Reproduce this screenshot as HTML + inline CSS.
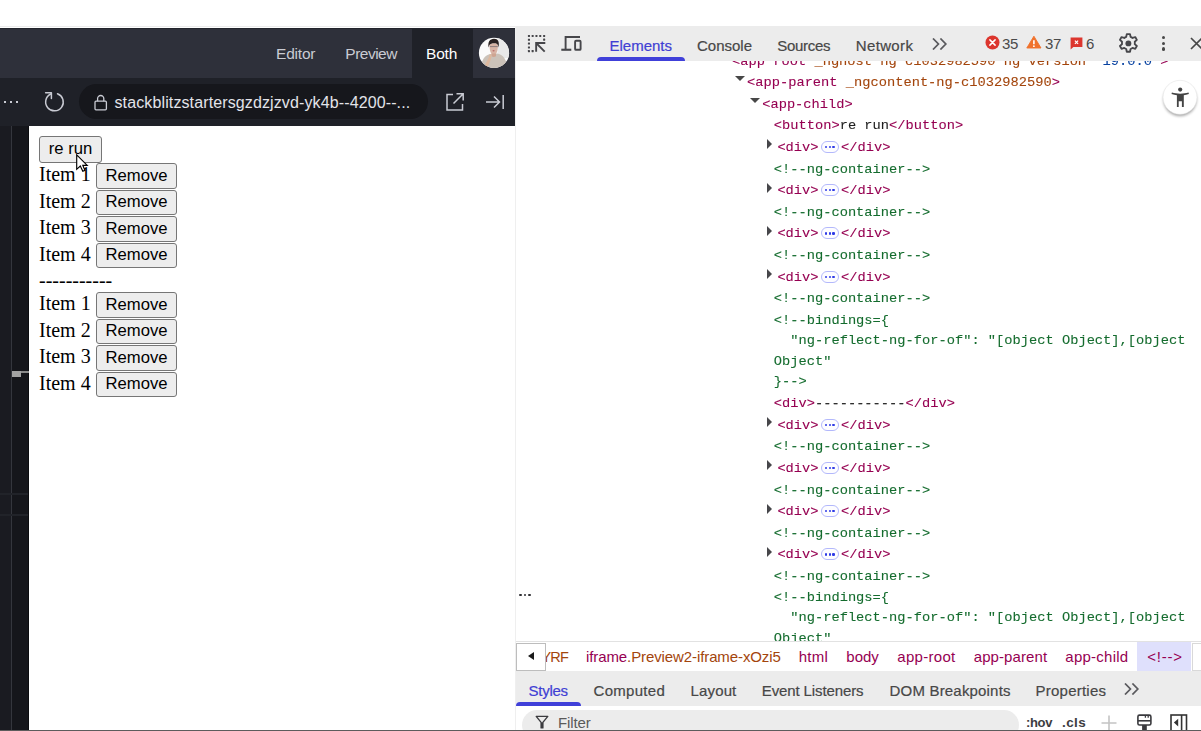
<!DOCTYPE html>
<html>
<head>
<meta charset="utf-8">
<style>
*{box-sizing:border-box;margin:0;padding:0}
html,body{width:1201px;height:731px;overflow:hidden;background:#fff;font-family:"Liberation Sans",sans-serif;}
.abs{position:absolute}
#topline{left:0;top:26px;width:1201px;height:1px;background:#ececec}
#sb{left:0;top:28px;width:515px;height:703px;background:#1f2128;overflow:hidden}
#sbtop{left:0;top:0;width:515px;height:50px;background:#2e303a;border-top:1px solid #22242c}
#both{left:412px;top:0;width:61px;height:50px;background:#1f2128}
.tab{top:15.6px;font-size:15.5px;letter-spacing:-0.2px;color:#c9cbd3;line-height:18px;white-space:nowrap}
#urlbar{left:0;top:50px;width:515px;height:48px;background:#1f2128}
#pill{left:79px;top:6px;width:349px;height:35px;border-radius:18px;background:#16171c}
#urltext{left:35.5px;top:10.4px;font-size:16px;letter-spacing:0.12px;line-height:18px;color:#e3e4ea;white-space:nowrap}
#side{left:0;top:98px;width:29px;height:605px;background:#15161b}
#preview{left:29px;top:98px;width:486px;height:604px;background:#fff;font-family:"Liberation Serif",serif;font-size:20px;color:#000}
.row{position:absolute;left:10px;white-space:nowrap;line-height:22px}
.btn{position:absolute;font-family:"Liberation Sans",sans-serif;font-size:16.67px;color:#000;background:#ededed;border:1px solid #767676;border-radius:3px;text-align:center;line-height:22px;padding-top:1.4px;height:25px}
#dt{left:516px;top:27px;width:685px;height:704px;background:#fff;overflow:hidden}
#dttabs{left:0;top:0;width:685px;height:34px;background:#ececec;z-index:3}
.dtab{top:9.5px;font-size:15px;line-height:18px;white-space:nowrap;-webkit-text-stroke:0.2px}
.cnt{top:7.8px;font-size:15px;letter-spacing:-0.35px;line-height:18px;color:#4a4a4a;white-space:nowrap}
#tree{left:0;top:33px;width:685px;height:582px;font-family:"Liberation Mono",monospace;font-size:13.72px;overflow:hidden;-webkit-text-stroke:0.1px;will-change:transform}
.ln{position:absolute;line-height:18px;height:18px;white-space:pre;transform:scaleY(0.975);transform-origin:0 11.6px}
.t{color:#960052}.a{color:#a3450c}.c{color:#146c2e}.k{color:#1f1f1f}.v{color:#0842a0}
.el{display:inline-block;width:22.5px}
.pillm{width:17.6px;height:12px;border-radius:6px;background:#fdfdff;border:1px solid #b3b8fb}
.pillm i{position:absolute;top:4px;width:2.2px;height:2.2px;border-radius:1.1px;background:#2f3be6}
.pillm i:nth-child(1){left:3.1px}.pillm i:nth-child(2){left:6.7px}.pillm i:nth-child(3){left:10.3px}
#crumbs{left:0;top:614px;width:685px;height:30px;background:#fff;border-top:1px solid #e2e2e2}
.cr{top:5.5px;font-size:15px;line-height:18px;color:#960052;white-space:nowrap}
#stabs{left:0;top:644px;width:685px;height:35px;background:#ececec}
.stab{top:11px;font-size:15px;line-height:18px;white-space:nowrap;-webkit-text-stroke:0.2px}
#filter{left:0;top:679px;width:685px;height:25px;background:#fff}
</style>
</head>
<body>
<div id="topline" class="abs"></div>
<div class="abs" style="left:515px;top:26px;width:1px;height:705px;background:#efefef"></div>
<div id="sb" class="abs">
  <div id="sbtop" class="abs">
    <div id="both" class="abs"></div>
    <div class="abs tab" style="left:276px">Editor</div>
    <div class="abs tab" style="left:345.3px;letter-spacing:-0.5px">Preview</div>
    <div class="abs tab" style="left:426px;color:#fff">Both</div>
    <svg class="abs" style="left:474px;top:3px" width="40" height="40" viewBox="474 32 40 40">
      <defs><clipPath id="avc"><circle cx="494" cy="52.9" r="15.1"/></clipPath>
      <filter id="avb" x="-10%" y="-10%" width="120%" height="120%"><feGaussianBlur stdDeviation="0.45"/></filter></defs>
      <circle cx="494" cy="52.9" r="15.1" fill="#fbfbfb"/>
      <g clip-path="url(#avc)"><g filter="url(#avb)">
        <rect x="497.5" y="36" width="14" height="22" fill="#e9e9e9"/>
        <path d="M481 70 C481 60 484.5 55.5 490 54 L497 53.6 C503 54.6 507 59 507.4 70 Z" fill="#cbc2b9"/>
        <path d="M489.6 45 C489.4 50 490.6 54.6 493.6 54.8 C496.6 54.8 498 50.5 497.9 45 C497 42.6 491 42.6 489.6 45 Z" fill="#d9b5a6"/>
        <path d="M491.5 53.5 H496 V56.2 C494.5 57.2 492.8 57.2 491.5 56.2 Z" fill="#cfa592"/>
        <path d="M488.6 47.5 C487.6 42 489.8 38.9 494 38.8 C498.2 38.8 499.6 42 498.6 47.5 C498.2 45 497.2 43.6 495.5 43.3 C493 43 490.5 43.5 489.4 45 Z" fill="#2b2220"/>
        <path d="M489.8 46.6 H497.8" stroke="#5b5660" stroke-width="0.6" fill="none"/>
        <path d="M484.6 65.6 C486.4 62 488.6 58.6 489.8 54.2 L491.6 54.6 C491.8 58.5 489.4 63 487.4 67.4 Z" fill="#ddb89e"/>
        <ellipse cx="493.6" cy="50.8" rx="1.1" ry="0.7" fill="#b9706c"/>
      </g></g>
    </svg>
  </div>
  <div id="urlbar" class="abs">
    <div class="abs" style="left:3.5px;top:23px;width:2px;height:2px;background:#c9cbd3"></div>
    <div class="abs" style="left:10px;top:23px;width:2px;height:2px;background:#c9cbd3"></div>
    <div class="abs" style="left:16.1px;top:23px;width:2px;height:2px;background:#c9cbd3"></div>
    <svg class="abs" style="left:42px;top:11px" width="24" height="24" viewBox="0 0 24 24" fill="none" stroke="#c9cbd3" stroke-width="1.5" stroke-linecap="round" stroke-linejoin="round">
      <path d="M15.5 4.75 A8.8 8.8 0 1 1 8.7 5.05"/>
      <path d="M3.6 3.7 H9.4 V9.4"/>
    </svg>
    <div id="pill" class="abs">
      <svg class="abs" style="left:14px;top:8.5px" width="16" height="20" viewBox="0 0 16 20" fill="none" stroke="#c9cbd3" stroke-width="1.3">
        <rect x="2" y="8.2" width="11.4" height="8.6" rx="1"/>
        <path d="M4.6 8.2 V5.6 a3.1 3.1 0 0 1 6.2 0 V8.2"/>
      </svg>
      <div id="urltext" class="abs">stackblitzstartersgzdzjzvd-yk4b--4200--...</div>
    </div>
    <svg class="abs" style="left:444px;top:13px" width="22" height="22" viewBox="0 0 22 22" fill="none" stroke="#c9cbd3" stroke-width="1.5">
      <path d="M9 3.5 H3 V19 H18.5 V13"/>
      <path d="M12.5 2.8 H19.2 V9.5 M19 3 L9.5 12.5"/>
    </svg>
    <svg class="abs" style="left:484px;top:14px" width="22" height="20" viewBox="0 0 22 20" fill="none" stroke="#c9cbd3" stroke-width="1.5">
      <path d="M2 10 H15 M10 4.5 L15.5 10 L10 15.5 M19.2 3 V17"/>
    </svg>
  </div>
  <div id="side" class="abs">
    <div class="abs" style="left:0;top:0;width:11px;height:605px;background:#1a1b21"></div>
    <div class="abs" style="left:11px;top:0;width:1px;height:605px;background:#34363d"></div>
    <div class="abs" style="left:28px;top:0;width:1px;height:605px;background:#0b0c0f"></div>
    <div class="abs" style="left:0;top:367px;width:28px;height:2px;background:#212329"></div>
    <div class="abs" style="left:0;top:388px;width:28px;height:2px;background:#212329"></div>
    <div class="abs" style="left:12px;top:245px;width:17px;height:2px;background:#8a8a8a"></div>
    <div class="abs" style="left:12px;top:245px;width:9px;height:6px;background:#a3a3a3"></div>
  </div>
  <div id="preview" class="abs">
    <div class="btn" style="left:10px;top:10px;width:63px;height:26.5px">re run</div>
    <div class="row" style="top:37.2px">Item 1</div><div class="btn" style="left:67.3px;top:37.3px;width:80.5px;height:25.5px;padding-top:0.3px">Remove</div>
    <div class="row" style="top:63.7px">Item 2</div><div class="btn" style="left:67.3px;top:63.8px;width:80.5px;height:25.5px;padding-top:0.3px">Remove</div>
    <div class="row" style="top:90.2px">Item 3</div><div class="btn" style="left:67.3px;top:90.3px;width:80.5px;height:25.5px;padding-top:0.3px">Remove</div>
    <div class="row" style="top:116.7px">Item 4</div><div class="btn" style="left:67.3px;top:116.8px;width:80.5px;height:25.5px;padding-top:0.3px">Remove</div>
    <div class="row" style="top:143.3px">-----------</div>
    <div class="row" style="top:166.2px">Item 1</div><div class="btn" style="left:67.3px;top:166.3px;width:80.5px;height:25.5px;padding-top:0.3px">Remove</div>
    <div class="row" style="top:192.7px">Item 2</div><div class="btn" style="left:67.3px;top:192.8px;width:80.5px;height:25.5px;padding-top:0.3px">Remove</div>
    <div class="row" style="top:219.2px">Item 3</div><div class="btn" style="left:67.3px;top:219.3px;width:80.5px;height:25.5px;padding-top:0.3px">Remove</div>
    <div class="row" style="top:245.7px">Item 4</div><div class="btn" style="left:67.3px;top:245.8px;width:80.5px;height:25.5px;padding-top:0.3px">Remove</div>
    <svg class="abs" style="left:41px;top:22px" width="30" height="30" viewBox="70 148 30 30">
      <path d="M76.7 154.9 V169.3 L80.3 166.0 L82.8 171.3 L84.9 170.4 L82.8 165.3 H87.2 Z" fill="#fff" stroke="#000" stroke-width="1.15" stroke-linejoin="miter"/>
    </svg>
  </div>
</div>
<div id="dt" class="abs">
  <div id="dttabs" class="abs">
    <svg class="abs" style="left:4px;top:1px" width="80" height="32" viewBox="520 28 80 32" fill="none" stroke="#46464a">
      <g fill="#46464a" stroke="none"><rect x="527.9" y="34.9" width="2.1" height="2.1" rx="0.4"/><rect x="531.6" y="34.9" width="2.1" height="2.1" rx="0.4"/><rect x="535.4" y="34.9" width="2.1" height="2.1" rx="0.4"/><rect x="539.2" y="34.9" width="2.1" height="2.1" rx="0.4"/><rect x="543.1" y="34.9" width="2.1" height="2.1" rx="0.4"/><rect x="527.9" y="38.7" width="2.1" height="2.1" rx="0.4"/><rect x="527.9" y="42.5" width="2.1" height="2.1" rx="0.4"/><rect x="527.9" y="46.4" width="2.1" height="2.1" rx="0.4"/><rect x="527.9" y="50.1" width="2.1" height="2.1" rx="0.4"/><rect x="543.1" y="38.6" width="2.1" height="2.1" rx="0.4"/><rect x="531.6" y="50.1" width="2.1" height="2.1" rx="0.4"/></g>
      <path d="M536.15 51.8 V43.05 H545.3" stroke-width="1.9"/><path d="M536.6 43.5 L544.7 51.6" stroke-width="1.9"/>
      <path d="M580 37 H565.6 V49.5" stroke-width="1.9"/><path d="M561.3 49.75 H571.3" stroke-width="2.1"/>
      <rect x="575.1" y="40.8" width="5.5" height="9" rx="0.9" stroke-width="1.9"/>
    </svg>
    <div class="abs dtab" style="left:93.5px;color:#3f3fd4;">Elements</div>
    <div class="abs dtab" style="left:181.0px;color:#474747;">Console</div>
    <div class="abs dtab" style="left:261.3px;color:#474747;letter-spacing:-0.3px">Sources</div>
    <div class="abs dtab" style="left:339.8px;color:#474747;letter-spacing:0.35px">Network</div>
    <div class="abs" style="left:81px;top:30px;width:88px;height:4px;background:#4040d9;border-radius:4px 4px 0 0"></div>
    <svg class="abs" style="left:416px;top:11px" width="16" height="12" viewBox="0 0 16 12" fill="none" stroke="#5a5a5e" stroke-width="1.75">
      <path d="M1 0.5 L6.4 6 L1 11.5 M8.4 0.5 L13.8 6 L8.4 11.5"/>
    </svg>
    <svg class="abs" style="left:469px;top:8px" width="15" height="15" viewBox="0 0 15 15">
      <circle cx="7.5" cy="7.5" r="7" fill="#dc362e"/>
      <path d="M4.9 4.9 L10.1 10.1 M10.1 4.9 L4.9 10.1" stroke="#fff" stroke-width="1.5" stroke-linecap="round"/>
    </svg>
    <div class="abs cnt" style="left:486.0px">35</div>
    <svg class="abs" style="left:510.4px;top:8.3px" width="16" height="14" viewBox="0 0 16 14">
      <path d="M7.9 1.2 L15 13 H0.8 Z" fill="#f0722c" stroke="#f0722c" stroke-width="0.9" stroke-linejoin="round"/>
      <path d="M7.9 5.2 V9.2" stroke="#fff" stroke-width="1.6"/><circle cx="7.9" cy="11.2" r="0.9" fill="#fff"/>
    </svg>
    <div class="abs cnt" style="left:529.0px">37</div>
    <svg class="abs" style="left:554px;top:10px" width="13" height="13" viewBox="0 0 13 13">
      <path d="M0.6 0.5 H12.4 V10 H3.4 L0.6 12.6 Z" fill="#dc362e"/>
      <path d="M4.9 3.6 L8.1 6.8 M8.1 3.6 L4.9 6.8" stroke="#fff" stroke-width="1.2"/>
    </svg>
    <div class="abs cnt" style="left:570.0px">6</div>
    <svg class="abs" style="left:601px;top:5px" width="22.8" height="22.8" viewBox="0 0 24 24" fill="none" stroke="#46464a" stroke-width="1.95" stroke-linejoin="round">
      <path d="M10.3 2.2 h3.4 l0.6 2.9 a7.3 7.3 0 0 1 2.1 1.2 l2.8 -0.95 l1.7 2.95 l-2.2 1.95 a7.3 7.3 0 0 1 0 2.5 l2.2 1.95 l-1.7 2.95 l-2.8 -0.95 a7.3 7.3 0 0 1 -2.1 1.2 l-0.6 2.9 h-3.4 l-0.6 -2.9 a7.3 7.3 0 0 1 -2.1 -1.2 l-2.8 0.95 l-1.7 -2.95 l2.2 -1.95 a7.3 7.3 0 0 1 0 -2.5 l-2.2 -1.95 l1.7 -2.95 l2.8 0.95 a7.3 7.3 0 0 1 2.1 -1.2 Z"/>
      <circle cx="12" cy="12" r="3.1" fill="#46464a" stroke="none"/>
    </svg>
    <div class="abs" style="left:645.5px;top:8.8px;width:3.6px;height:3.6px;border-radius:2px;background:#474747"></div>
    <div class="abs" style="left:645.5px;top:14.6px;width:3.6px;height:3.6px;border-radius:2px;background:#474747"></div>
    <div class="abs" style="left:645.5px;top:20.4px;width:3.6px;height:3.6px;border-radius:2px;background:#474747"></div>
    <svg class="abs" style="left:674px;top:10px" width="12" height="13" viewBox="0 0 12 13" fill="none" stroke="#474747" stroke-width="1.7">
      <path d="M1 1 L12 12 M12 1 L1 12"/>
    </svg>
  </div>
  <div id="tree" class="abs">
    <div class="ln" style="left:216.1px;top:-7.1px"><span class="t">&lt;app root </span><span class="a">_nghost ng c1032982590</span><span class="t"> </span><span class="a">ng version</span><span class="t"> "</span><span class="v">19.0.0</span><span class="t">"&gt;</span></div>
    <div class="ln" style="left:231.0px;top:14.1px"><span class="t">&lt;app-parent </span><span class="a">_ngcontent-ng-c1032982590</span><span class="t">&gt;</span></div>
    <div class="abs" style="left:218.7px;top:16.4px;width:0;height:0;border-left:5px solid transparent;border-right:5px solid transparent;border-top:5.5px solid #474747"></div>
    <div class="ln" style="left:246.2px;top:35.7px"><span class="t">&lt;app-child&gt;</span></div>
    <div class="abs" style="left:234.0px;top:38.0px;width:0;height:0;border-left:5px solid transparent;border-right:5px solid transparent;border-top:5.5px solid #474747"></div>
    <div class="ln" style="left:257.8px;top:57.3px"><span class="t">&lt;button&gt;</span><span class="k">re run</span><span class="t">&lt;/button&gt;</span></div>
    <div class="abs" style="left:251.0px;top:79.3px;width:0;height:0;border-top:5px solid transparent;border-bottom:5px solid transparent;border-left:5.6px solid #46464a"></div>
    <div class="ln" style="left:261.4px;top:78.9px"><span class="t">&lt;div&gt;</span><span class="el"></span><span class="t">&lt;/div&gt;</span></div>
    <div class="abs pillm" style="left:305.2px;top:80.9px"><i></i><i></i><i></i></div>
    <div class="ln" style="left:257.8px;top:100.5px"><span class="c">&lt;!--ng-container--&gt;</span></div>
    <div class="abs" style="left:251.0px;top:122.6px;width:0;height:0;border-top:5px solid transparent;border-bottom:5px solid transparent;border-left:5.6px solid #46464a"></div>
    <div class="ln" style="left:261.4px;top:122.2px"><span class="t">&lt;div&gt;</span><span class="el"></span><span class="t">&lt;/div&gt;</span></div>
    <div class="abs pillm" style="left:305.2px;top:124.2px"><i></i><i></i><i></i></div>
    <div class="ln" style="left:257.8px;top:143.8px"><span class="c">&lt;!--ng-container--&gt;</span></div>
    <div class="abs" style="left:251.0px;top:165.8px;width:0;height:0;border-top:5px solid transparent;border-bottom:5px solid transparent;border-left:5.6px solid #46464a"></div>
    <div class="ln" style="left:261.4px;top:165.4px"><span class="t">&lt;div&gt;</span><span class="el"></span><span class="t">&lt;/div&gt;</span></div>
    <div class="abs pillm" style="left:305.2px;top:167.4px"><i></i><i></i><i></i></div>
    <div class="ln" style="left:257.8px;top:187.0px"><span class="c">&lt;!--ng-container--&gt;</span></div>
    <div class="abs" style="left:251.0px;top:209.0px;width:0;height:0;border-top:5px solid transparent;border-bottom:5px solid transparent;border-left:5.6px solid #46464a"></div>
    <div class="ln" style="left:261.4px;top:208.6px"><span class="t">&lt;div&gt;</span><span class="el"></span><span class="t">&lt;/div&gt;</span></div>
    <div class="abs pillm" style="left:305.2px;top:210.6px"><i></i><i></i><i></i></div>
    <div class="ln" style="left:257.8px;top:230.3px"><span class="c">&lt;!--ng-container--&gt;</span></div>
    <div class="ln" style="left:257.8px;top:251.9px"><span class="c">&lt;!--bindings={</span></div>
    <div class="ln" style="left:257.8px;top:272.4px"><span class="c">  "ng-reflect-ng-for-of": "[object Object],[object</span></div>
    <div class="ln" style="left:257.8px;top:292.9px"><span class="c">Object"</span></div>
    <div class="ln" style="left:257.8px;top:313.4px"><span class="c">}--&gt;</span></div>
    <div class="ln" style="left:257.8px;top:335.1px"><span class="t">&lt;div&gt;</span><span class="k">-----------</span><span class="t">&lt;/div&gt;</span></div>
    <div class="abs" style="left:251.0px;top:357.1px;width:0;height:0;border-top:5px solid transparent;border-bottom:5px solid transparent;border-left:5.6px solid #46464a"></div>
    <div class="ln" style="left:261.4px;top:356.7px"><span class="t">&lt;div&gt;</span><span class="el"></span><span class="t">&lt;/div&gt;</span></div>
    <div class="abs pillm" style="left:305.2px;top:358.7px"><i></i><i></i><i></i></div>
    <div class="ln" style="left:257.8px;top:378.3px"><span class="c">&lt;!--ng-container--&gt;</span></div>
    <div class="abs" style="left:251.0px;top:400.4px;width:0;height:0;border-top:5px solid transparent;border-bottom:5px solid transparent;border-left:5.6px solid #46464a"></div>
    <div class="ln" style="left:261.4px;top:400.0px"><span class="t">&lt;div&gt;</span><span class="el"></span><span class="t">&lt;/div&gt;</span></div>
    <div class="abs pillm" style="left:305.2px;top:402.0px"><i></i><i></i><i></i></div>
    <div class="ln" style="left:257.8px;top:421.6px"><span class="c">&lt;!--ng-container--&gt;</span></div>
    <div class="abs" style="left:251.0px;top:443.6px;width:0;height:0;border-top:5px solid transparent;border-bottom:5px solid transparent;border-left:5.6px solid #46464a"></div>
    <div class="ln" style="left:261.4px;top:443.2px"><span class="t">&lt;div&gt;</span><span class="el"></span><span class="t">&lt;/div&gt;</span></div>
    <div class="abs pillm" style="left:305.2px;top:445.2px"><i></i><i></i><i></i></div>
    <div class="ln" style="left:257.8px;top:464.8px"><span class="c">&lt;!--ng-container--&gt;</span></div>
    <div class="abs" style="left:251.0px;top:486.8px;width:0;height:0;border-top:5px solid transparent;border-bottom:5px solid transparent;border-left:5.6px solid #46464a"></div>
    <div class="ln" style="left:261.4px;top:486.4px"><span class="t">&lt;div&gt;</span><span class="el"></span><span class="t">&lt;/div&gt;</span></div>
    <div class="abs pillm" style="left:305.2px;top:488.4px"><i></i><i></i><i></i></div>
    <div class="ln" style="left:257.8px;top:508.1px"><span class="c">&lt;!--ng-container--&gt;</span></div>
    <div class="ln" style="left:257.8px;top:529.2px"><span class="c">&lt;!--bindings={</span></div>
    <div class="ln" style="left:257.8px;top:549.4px"><span class="c">  "ng-reflect-ng-for-of": "[object Object],[object</span></div>
    <div class="ln" style="left:257.8px;top:569.7px"><span class="c">Object"</span></div>
  </div>
  <div class="abs" style="left:2.9px;top:566.5px;width:2.8px;height:2.8px;border-radius:1.4px;background:#2e2e32"></div>
  <div class="abs" style="left:7.5px;top:566.5px;width:2.8px;height:2.8px;border-radius:1.4px;background:#2e2e32"></div>
  <div class="abs" style="left:12.1px;top:566.5px;width:2.8px;height:2.8px;border-radius:1.4px;background:#2e2e32"></div>
  <svg class="abs" style="left:642px;top:50px" width="44" height="46" viewBox="0 0 44 46">
    <defs><filter id="sh" x="-30%" y="-30%" width="160%" height="170%"><feGaussianBlur stdDeviation="1.6"/></filter></defs>
    <circle cx="22" cy="22.5" r="16.5" fill="#000" opacity="0.38" filter="url(#sh)"/>
    <circle cx="22" cy="20.3" r="17" fill="#fff" stroke="#e4e4e4" stroke-width="0.6"/>
    <circle cx="22.2" cy="12.6" r="2.1" fill="#444"/>
    <path d="M13.9 15.6 C16.5 16.4 19 16.7 22.2 16.7 C25.4 16.7 27.9 16.4 30.5 15.6 L30.9 17 C28.9 17.7 27.2 18 25.8 18.2 V30 H23.9 V24.3 H20.7 V30 H18.9 V18.2 C17.2 18 15.5 17.7 13.5 17 Z" fill="#444"/>
  </svg>
  <div id="crumbs" class="abs">
    <div class="abs" style="left:0;top:1px;width:30px;height:28px;background:#fff;border:1px solid #bdbdbd"></div>
    <div class="abs" style="left:12px;top:9.5px;width:0;height:0;border-top:4px solid transparent;border-bottom:4px solid transparent;border-right:6.2px solid #1a1a1a"></div>
    <div class="abs" style="left:30px;top:0;width:40px;height:30px;overflow:hidden"><div class="abs cr" style="left:-4.5px;top:5.5px;color:#a3450c;font-size:14.5px;letter-spacing:-0.8px">YRF</div></div>
    <div class="abs cr" style="left:70.0px;letter-spacing:-0.1px">iframe<span style="color:#a3450c">.Preview2-iframe-xOzi5</span></div>
    <div class="abs cr" style="left:282.7px;letter-spacing:0.3px">html</div>
    <div class="abs cr" style="left:330.3px;">body</div>
    <div class="abs cr" style="left:381.3px;letter-spacing:0.3px">app-root</div>
    <div class="abs cr" style="left:457.7px;letter-spacing:0.1px">app-parent</div>
    <div class="abs cr" style="left:549.3px;letter-spacing:0.25px">app-child</div>
    <div class="abs" style="left:621px;top:0px;width:54px;height:29px;background:#dfe0fc"></div>
    <div class="abs cr" style="left:631.3px;letter-spacing:0.75px"><span style="color:#960052">&lt;!--&gt;</span></div>
    <div class="abs" style="left:676px;top:1px;width:30px;height:28px;background:#fff;border:1px solid #d9d9d9"></div>
  </div>
  <div id="stabs" class="abs">
    <div class="abs stab" style="left:12.5px;color:#3f3fd4;letter-spacing:-0.25px">Styles</div>
    <div class="abs stab" style="left:77.5px;color:#474747;letter-spacing:0.3px">Computed</div>
    <div class="abs stab" style="left:174.5px;color:#474747;letter-spacing:0.15px">Layout</div>
    <div class="abs stab" style="left:245.8px;color:#474747;letter-spacing:-0.12px">Event Listeners</div>
    <div class="abs stab" style="left:373.6px;color:#474747;letter-spacing:0.18px">DOM Breakpoints</div>
    <div class="abs stab" style="left:519.6px;color:#474747;letter-spacing:0.22px">Properties</div>
    <div class="abs" style="left:0;top:31px;width:65px;height:4px;background:#4040d9;border-radius:4px 4px 0 0"></div>
    <svg class="abs" style="left:608px;top:12px" width="16" height="12" viewBox="0 0 16 12" fill="none" stroke="#5a5a5e" stroke-width="1.75">
      <path d="M1 0.5 L6.4 6 L1 11.5 M8.4 0.5 L13.8 6 L8.4 11.5"/>
    </svg>
  </div>
  <div id="filter" class="abs">
    <div class="abs" style="left:6px;top:4px;width:497px;height:30px;border-radius:15px;background:#ececec"></div>
    <svg class="abs" style="left:19px;top:9px" width="14" height="14" viewBox="0 0 14 14" fill="none" stroke="#3a3a3e" stroke-width="1.35">
      <path d="M1.2 1.4 H12.8 L7.9 7.4 V12.9 H6.1 V7.4 Z" stroke-linejoin="round" fill="none"/><path d="M7 7.4 V12.9" stroke-width="1.9"/>
    </svg>
    <div class="abs" style="left:42px;top:8px;font-size:15px;line-height:18px;color:#5a5a5a;letter-spacing:-0.1px">Filter</div>
    <div class="abs" style="left:510px;top:6px;font-size:13px;line-height:18px;color:#3d3d41;font-weight:bold;letter-spacing:-0.35px;margin-top:1.5px">:hov</div>
    <div class="abs" style="left:546px;top:6px;font-size:13.5px;line-height:18px;color:#3d3d41;font-weight:bold;letter-spacing:0.4px;margin-top:1.5px">.cls</div>
    <svg class="abs" style="left:585px;top:9px" width="16" height="16" viewBox="0 0 16 16" stroke="#c4c4c4" stroke-width="1.6"><path d="M8 0.5 V15.5 M0.5 8 H15.5"/></svg>
    <svg class="abs" style="left:617px;top:5px" width="22" height="20" viewBox="1133 711 22 20" fill="none" stroke="#3a3a3e" stroke-width="1.6">
      <rect x="1137.9" y="715.1" width="13" height="9.9" rx="1.6"/><path d="M1137.9 720.8 H1150.9"/>
      <path d="M1145.4 715 V717.8 M1148.2 715 V717.8" stroke-width="1.3"/>
      <rect x="1142.1" y="725" width="4.7" height="6" fill="#3a3a3e" stroke="none"/>
    </svg>
    <svg class="abs" style="left:654px;top:8px" width="18" height="18" viewBox="0 0 18 18" fill="none" stroke="#333" stroke-width="1.6">
      <rect x="1" y="1" width="15.5" height="17"/><path d="M11.6 1 V18"/><path d="M8.2 4.8 L3.9 8.6 L8.2 12.4 Z" fill="#333" stroke="none"/>
    </svg>
  </div>
</div>
<div class="abs" style="left:0;top:730px;width:1201px;height:1px;background:#5c5c5c"></div>
</body>
</html>
